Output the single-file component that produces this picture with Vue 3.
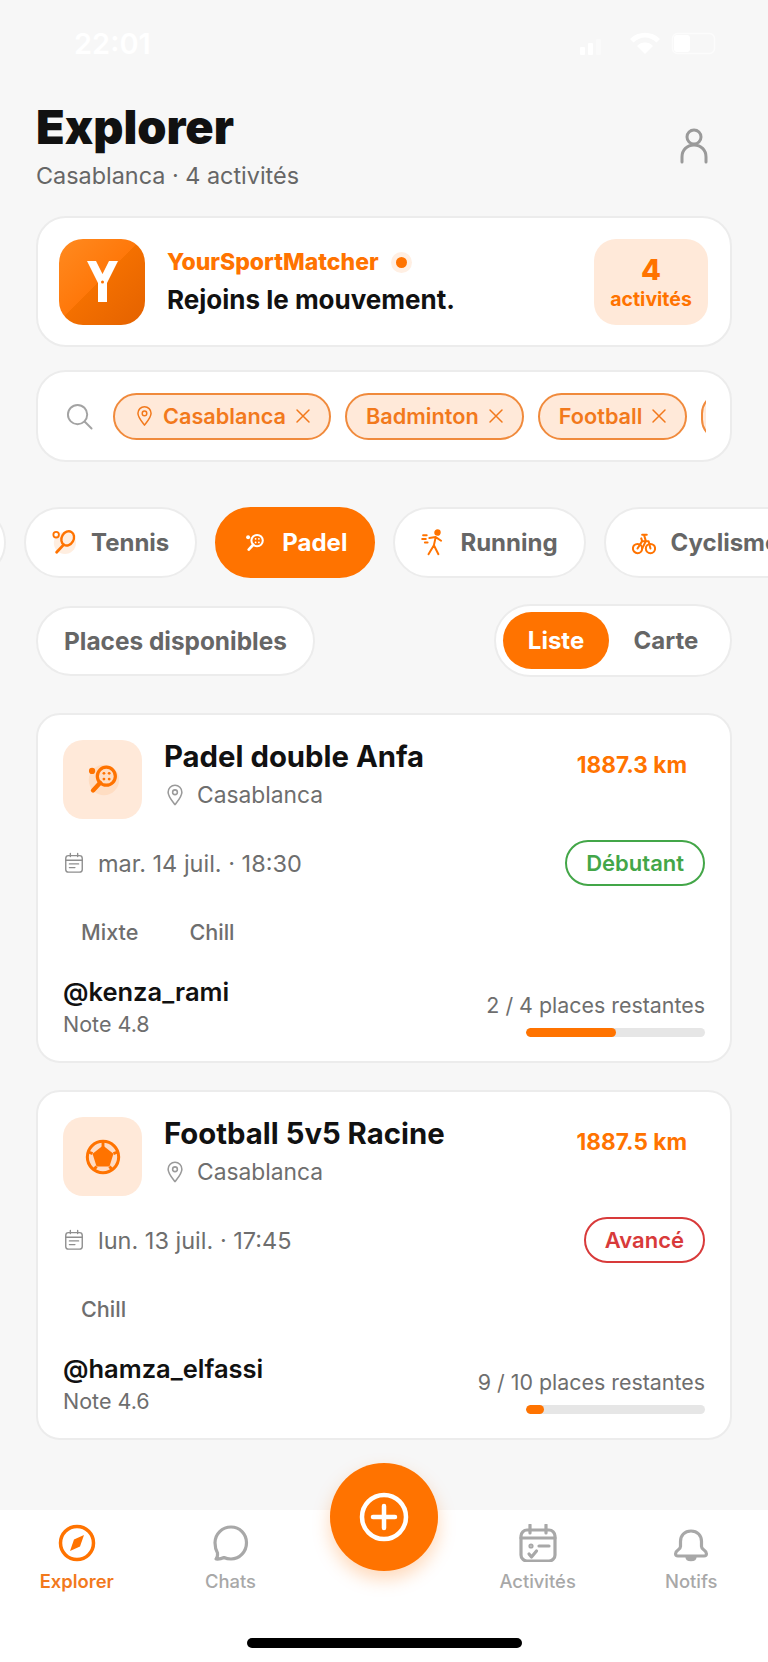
<script setup>
const filters = [
  { label: "Casablanca", pin: true },
  { label: "Badminton" },
  { label: "Football" },
];

const cards = [
  {
    title: "Padel double Anfa",
    icon: "padel",
    km: "1887.3 km",
    date: "mar. 14 juil. · 18:30",
    level: "Débutant",
    levelClass: "green",
    tags: ["Mixte", "Chill"],
    user: "@kenza_rami",
    note: "Note 4.8",
    places: "2 / 4 places restantes",
    fill: 50,
  },
  {
    title: "Football 5v5 Racine",
    icon: "ball",
    km: "1887.5 km",
    date: "lun. 13 juil. · 17:45",
    level: "Avancé",
    levelClass: "red",
    tags: ["Chill"],
    user: "@hamza_elfassi",
    note: "Note 4.6",
    places: "9 / 10 places restantes",
    fill: 10,
  },
];
</script>

<template>
  <div class="page">
    <!-- shared icons -->
    <svg width="0" height="0" class="defs">
      <symbol id="pin" viewBox="0 0 24 24">
        <path d="M12 22.500c-1-1.600-7.500-8.400-7.500-13.600a7.500 7.500 0 0 1 15 0c0 5.200-6.500 12-7.500 13.600z" fill="none" stroke="currentColor" stroke-width="1.700" stroke-linejoin="round" />
        <circle cx="12" cy="9" r="2.600" fill="none" stroke="currentColor" stroke-width="1.700" />
      </symbol>
      <symbol id="cross" viewBox="0 0 16 16">
        <path d="M2 2l12 12M14 2L2 14" fill="none" stroke="currentColor" stroke-width="1.500" stroke-linecap="round" />
      </symbol>
      <symbol id="padel" viewBox="0 0 40 40">
        <circle cx="21" cy="20" r="16" fill="#ff7300" opacity="0.1" />
        <circle cx="8.500" cy="10.500" r="3.300" fill="currentColor" />
        <circle cx="23.500" cy="16" r="9.500" fill="none" stroke="currentColor" stroke-width="3.400" />
        <path d="M17 23l-7.500 8" stroke="currentColor" stroke-width="4.600" stroke-linecap="round" />
        <circle cx="21" cy="13" r="1.500" fill="currentColor" />
        <circle cx="26.500" cy="13" r="1.500" fill="currentColor" />
        <circle cx="21" cy="19" r="1.500" fill="currentColor" />
        <circle cx="26.500" cy="19" r="1.500" fill="currentColor" />
      </symbol>
      <symbol id="ball" viewBox="0 0 40 40">
        <circle cx="20" cy="20" r="16.500" fill="#ffdcc4" stroke="currentColor" stroke-width="3.200" />
        <path d="M20 8l11 8.500-4.200 13.500H13.200L9 16.500z" fill="currentColor" />
        <path d="M20 4v6M31 16.500l5-2M26.800 30l3.500 4M13.200 30l-3.500 4M9 16.500l-5-2" stroke="currentColor" stroke-width="3" />
      </symbol>
      <symbol id="cal" viewBox="0 0 24 24">
        <rect x="3" y="4" width="18" height="18" rx="3" fill="none" stroke="currentColor" stroke-width="1.500" />
        <path d="M3 9h18M8 1.500V5M16 1.500V5M7 13h10M7 17h6" fill="none" stroke="currentColor" stroke-width="1.500" stroke-linecap="round" />
      </symbol>
    </svg>

    <div class="status">
      <span class="time">22:01</span>
      <div class="status-icons">
        <svg width="138" height="24" viewBox="0 0 138 24" fill="#fff">
          <rect x="0" y="15" width="5" height="8" rx="1" />
          <rect x="8" y="11" width="5" height="12" rx="1" />
          <rect x="16" y="7" width="5" height="16" rx="1" opacity="0.4" />
          <path d="M50 7a21 21 0 0 1 30 0l-3.500 3.500a16 16 0 0 0-23 0zM57 14a11 11 0 0 1 16 0l-8 8z" />
          <rect x="92.500" y="1.500" width="42" height="20" rx="5" fill="none" stroke="#fff" stroke-width="1.500" opacity="0.6" />
          <rect x="94" y="3" width="16" height="17" rx="3" />
        </svg>
      </div>
    </div>

    <header class="head">
      <div>
        <h1 class="title">Explorer</h1>
        <p class="subtitle">Casablanca · 4 activités</p>
      </div>
      <svg class="user-ic" width="28" height="36" viewBox="0 0 28 36" fill="none" stroke="#9a9a9a" stroke-width="3">
        <circle cx="14" cy="9" r="7" />
        <path d="M2 34v-5c0-7 5-12 12-12s12 5 12 12v5" stroke-linecap="round" />
      </svg>
    </header>

    <section class="banner">
      <div class="logo">
        <svg width="31" height="41" viewBox="0 0 31 41">
          <path d="M0 0h9l6.500 13L22 0h9L20 22v19h-9V22z" fill="#fff" />
          <circle cx="15.500" cy="21" r="1.500" fill="#ff7300" />
        </svg>
      </div>
      <div class="banner-text">
        <div class="brand">YourSportMatcher <span class="dot"></span></div>
        <div class="tagline">Rejoins le mouvement.</div>
      </div>
      <div class="stat">
        <strong>4</strong>
        <span>activités</span>
      </div>
    </section>

    <section class="search">
      <svg class="search-ic" width="27" height="27" viewBox="0 0 28 28" fill="none" stroke="#a3a3a3" stroke-width="2">
        <circle cx="12" cy="12" r="10" />
        <path d="M19.500 19.500l7 7" stroke-linecap="round" />
      </svg>
      <div class="filters">
        <span v-for="f in filters" :key="f.label" class="filter">
          <svg v-if="f.pin" class="filter-pin"><use href="#pin" /></svg>
          {{ f.label }}
          <svg class="filter-x"><use href="#cross" /></svg>
        </span>
        <span class="filter filter-stub"></span>
      </div>
    </section>

    <nav class="cats">
      <div class="cat cat-first"></div>
      <div class="cat">
        <svg width="24" height="28" viewBox="0 0 26 28" fill="none" stroke="#ff7300">
          <circle cx="14" cy="14" r="12" fill="#ff7300" opacity="0.12" stroke="none" />
          <circle cx="4.500" cy="5" r="3" stroke-width="2" />
          <ellipse cx="17" cy="9" rx="6.500" ry="8" transform="rotate(30 17 9)" stroke-width="2.600" />
          <path d="M12.500 16L5 24" stroke-width="3" stroke-linecap="round" />
        </svg>
        <span>Tennis</span>
      </div>
      <div class="cat active">
        <svg width="24" height="28" class="white-ic"><use href="#padel" /></svg>
        <span>Padel</span>
      </div>
      <div class="cat">
        <svg width="24" height="27" viewBox="0 0 24 30" fill="none" stroke="#ff7300" stroke-width="2.200" stroke-linecap="round" stroke-linejoin="round">
          <circle cx="17" cy="4" r="2.500" fill="#ff7300" />
          <path d="M8 10l7-1 6 4M15 9l-2 9 5 10M13 18l-6 10M1 7h4M0 11h4M3 15h3" />
        </svg>
        <span>Running</span>
      </div>
      <div class="cat">
        <svg width="24" height="26" viewBox="0 0 26 28" fill="none" stroke="#ff7300" stroke-width="2.200" stroke-linecap="round" stroke-linejoin="round">
          <circle cx="6" cy="20" r="5" />
          <circle cx="20" cy="20" r="5" />
          <path d="M6 20l5-8h7l2 8M11 12L10 9M13 5l2 7-4 8M11 5h5" />
        </svg>
        <span>Cyclisme</span>
      </div>
    </nav>

    <div class="toolbar">
      <div class="avail">Places disponibles</div>
      <div class="toggle">
        <span class="toggle-on">Liste</span>
        <span class="toggle-off">Carte</span>
      </div>
    </div>

    <main class="list">
      <article v-for="c in cards" :key="c.title" class="card">
        <div class="card-top">
          <div class="card-icon">
            <svg width="38" height="38"><use :href="'#' + c.icon" /></svg>
          </div>
          <div class="card-head">
            <h3>{{ c.title }}</h3>
            <p><svg class="card-pin"><use href="#pin" /></svg>Casablanca</p>
          </div>
          <span class="km">{{ c.km }}</span>
        </div>

        <div class="card-meta">
          <span class="date"><svg class="cal"><use href="#cal" /></svg>{{ c.date }}</span>
          <span class="level" :class="c.levelClass">{{ c.level }}</span>
        </div>

        <div class="tags">
          <span v-for="t in c.tags" :key="t">{{ t }}</span>
        </div>

        <div class="card-foot">
          <div>
            <div class="who">{{ c.user }}</div>
            <div class="note">{{ c.note }}</div>
          </div>
          <div class="seats">
            <div class="seats-text">{{ c.places }}</div>
            <div class="bar"><div class="bar-fill" :style="{ width: c.fill + '%' }"></div></div>
          </div>
        </div>
      </article>
    </main>

    <footer class="tabbar">
      <div class="tabs">
        <div class="tab on">
          <svg width="38" height="38" viewBox="0 0 38 38" fill="none">
            <circle cx="19" cy="19" r="16.500" stroke="#ff7300" stroke-width="3.500" />
            <path d="M26 11l-4 11.500L12 27l4-11.500z" fill="#ff7300" />
          </svg>
          <span>Explorer</span>
        </div>
        <div class="tab">
          <svg width="38" height="38" viewBox="0 0 38 38" fill="none" stroke="#a8a8a8" stroke-width="3.200" stroke-linejoin="round">
            <path d="M20 3c8.800 0 15.500 7 15.500 15.800S28.800 35 20 35c-2.500 0-5-.5-7-1.500-2 1-5 1.800-8 1.500 1.200-1.300 1.800-3 1.500-6C4.800 26 4 22.500 4 18.800 4 10 11.200 3 20 3z" />
          </svg>
          <span>Chats</span>
        </div>
        <div class="tab"></div>
        <div class="tab">
          <svg width="38" height="38" viewBox="0 0 38 38" fill="none" stroke="#a8a8a8" stroke-width="3.200" stroke-linecap="round" stroke-linejoin="round">
            <rect x="2" y="6" width="34" height="31" rx="6" />
            <path d="M2 14h34M11 1v8M27 1v8M20 22h10" />
            <circle cx="12" cy="22" r="1" />
            <path d="M10 30l2.500 3 5-6" />
          </svg>
          <span>Activités</span>
        </div>
        <div class="tab">
          <svg width="38" height="38" viewBox="0 0 38 38" fill="none" stroke="#a8a8a8" stroke-width="3.200" stroke-linejoin="round">
            <path d="M19 7c-6.500 0-10.500 4.500-10.500 10.500v5c0 1.500-.8 2.300-2.500 3.500-3 2-3.500 6 0 6h26c3.500 0 3-4 0-6-1.700-1.200-2.500-2-2.500-3.500v-5C29.500 11.500 25.500 7 19 7z" />
            <path d="M15 33h8c0 3.500-8 3.500-8 0z" fill="#a8a8a8" />
          </svg>
          <span>Notifs</span>
        </div>
      </div>
      <button class="fab" type="button" aria-label="Ajouter">
        <svg width="50" height="50" viewBox="0 0 50 50" fill="none" stroke="#fff" stroke-width="4.500">
          <circle cx="25" cy="25" r="22" />
          <path d="M14 25h22M25 14v22" stroke-linecap="round" />
        </svg>
      </button>
      <div class="home"></div>
    </footer>
  </div>
</template>

<style>
html,
body {
  margin: 0;
  background: #f7f7f7;
}
</style>

<style scoped>
* {
  box-sizing: border-box;
}
.page {
  width: 768px;
  height: 1662px;
  display: flex;
  flex-direction: column;
  overflow: hidden;
  background: #f7f7f7;
  color: #111;
  font-family: Inter, "Noto Sans", sans-serif;
}
.defs {
  position: absolute;
}

/* STATUS */
.status {
  height: 100px;
  flex: none;
  padding: 26px 50px 0 74px;
  display: flex;
  justify-content: space-between;
  align-items: flex-start;
}
.time {
  color: #fff;
  font-size: 29px;
  font-weight: 600;
  line-height: 36px;
}
.status-icons {
  padding-top: 6px;
}

/* HEADER */
.head {
  height: 116px;
  flex: none;
  margin: 0 36px;
  display: flex;
  justify-content: space-between;
  align-items: flex-start;
}
.title {
  margin: 0;
  font-size: 46.800px;
  font-weight: 900;
  line-height: 54px;
}
.subtitle {
  margin: 7px 0 0;
  font-size: 23.400px;
  line-height: 30px;
  color: #666;
}
.user-ic {
  margin: 28px 24px 0 0;
}

/* BANNER */
.banner {
  flex: none;
  height: 131px;
  margin: 0 36px;
  padding: 0 22px 0 21px;
  display: flex;
  align-items: center;
  background: #fff;
  border: 2px solid #ececec;
  border-radius: 30px;
}
.logo {
  width: 86px;
  height: 86px;
  flex: none;
  border-radius: 24px;
  background: linear-gradient(135deg, #ff8a20, #ff780a 48%, #f47000 48%, #e46200);
  display: flex;
  align-items: center;
  justify-content: center;
}
.banner-text {
  flex: 1;
  margin-left: 22px;
}
.brand {
  display: flex;
  align-items: center;
  gap: 17px;
  font-size: 23px;
  font-weight: 800;
  line-height: 28px;
  color: #ff7300;
}
.dot {
  width: 11px;
  height: 11px;
  border-radius: 50%;
  background: #ff7300;
  box-shadow: 0 0 0 5px #ffefe3;
}
.tagline {
  margin-top: 9px;
  font-size: 26px;
  font-weight: 700;
  line-height: 30px;
}
.stat {
  width: 114px;
  height: 86px;
  border-radius: 22px;
  background: #ffe9d9;
  color: #ff7300;
  display: flex;
  flex-direction: column;
  align-items: center;
  justify-content: center;
}
.stat strong {
  font-size: 29px;
  font-weight: 800;
  line-height: 34px;
}
.stat span {
  font-size: 19.500px;
  font-weight: 700;
  line-height: 24px;
}

/* SEARCH */
.search {
  flex: none;
  height: 92px;
  margin: 23px 36px 0;
  padding-left: 28px;
  display: flex;
  align-items: center;
  background: #fff;
  border: 2px solid #ececec;
  border-radius: 30px;
}
.search-ic {
  flex: none;
}
.filters {
  width: 593px;
  margin-left: 20px;
  display: flex;
  gap: 14px;
  overflow: hidden;
}
.filter {
  flex: none;
  height: 47px;
  padding: 0 18px 0 19px;
  display: flex;
  align-items: center;
  gap: 8px;
  background: #ffe9d9;
  border: 2px solid #f08a3c;
  border-radius: 24px;
  color: #f2791c;
  font-size: 21.700px;
  font-weight: 600;
  white-space: nowrap;
}
.filter-stub {
  width: 40px;
}
.filter-pin {
  width: 21px;
  height: 24px;
}
.filter-x {
  width: 16px;
  height: 16px;
  margin-left: 1px;
}

/* CATEGORIES */
.cats {
  flex: none;
  height: 71px;
  margin-top: 45px;
  display: flex;
  gap: 18px;
  overflow: hidden;
}
.cat {
  flex: none;
  height: 71px;
  padding: 0 26px;
  display: flex;
  align-items: center;
  gap: 15px;
  background: #fff;
  border: 2px solid #ececec;
  border-radius: 36px;
  color: #666;
  font-size: 24px;
  font-weight: 700;
}
.cat-first {
  width: 100px;
  margin-left: -94px;
}
.cat.active {
  background: #ff7300;
  border-color: #ff7300;
  color: #fff;
}
.white-ic {
  color: #fff;
}

/* TOOLBAR */
.toolbar {
  flex: none;
  height: 73px;
  margin: 26px 36px 0;
  display: flex;
  align-items: center;
  justify-content: space-between;
}
.avail {
  height: 70px;
  padding: 0 26px;
  display: flex;
  align-items: center;
  background: #fff;
  border: 2px solid #ececec;
  border-radius: 35px;
  font-size: 24.400px;
  font-weight: 700;
  color: #666;
}
.toggle {
  width: 238px;
  height: 73px;
  padding: 7px;
  display: flex;
  align-items: center;
  background: #fff;
  border: 2px solid #ececec;
  border-radius: 37px;
  font-size: 24px;
  font-weight: 700;
}
.toggle-on {
  width: 106px;
  height: 57px;
  display: flex;
  align-items: center;
  justify-content: center;
  border-radius: 29px;
  background: #ff7300;
  color: #fff;
}
.toggle-off {
  flex: 1;
  text-align: center;
  color: #666;
}

/* CARDS */
.list {
  flex: 1;
  margin: 36px 36px 0;
  display: flex;
  flex-direction: column;
  gap: 27px;
}
.card {
  height: 350px;
  padding: 25px 25px 0;
  background: #fff;
  border: 2px solid #ececec;
  border-radius: 24px;
}
.card-top {
  height: 79px;
  display: flex;
}
.card-icon {
  width: 79px;
  height: 79px;
  flex: none;
  display: flex;
  align-items: center;
  justify-content: center;
  border-radius: 20px;
  background: #ffe9d9;
  color: #ff7300;
}
.card-head {
  flex: 1;
  margin-left: 22px;
}
.card-head h3 {
  margin: 0;
  font-size: 29.300px;
  font-weight: 700;
  line-height: 34px;
}
.card-head p {
  margin: 6px 0 0;
  display: flex;
  align-items: center;
  font-size: 22.800px;
  line-height: 30px;
  color: #6e6e6e;
}
.card-pin {
  width: 22px;
  height: 26px;
  margin-right: 11px;
  color: #9a9a9a;
}
.km {
  margin: 11px 18px 0 0;
  font-size: 22.600px;
  font-weight: 700;
  line-height: 28px;
  color: #ff7300;
}
.card-meta {
  height: 46px;
  margin-top: 21px;
  display: flex;
  align-items: center;
  justify-content: space-between;
}
.date {
  display: flex;
  align-items: center;
  font-size: 23.500px;
  color: #6e6e6e;
}
.cal {
  width: 22px;
  height: 24px;
  margin-right: 13px;
  color: #8e8e8e;
}
.level {
  height: 46px;
  padding: 0 19px;
  display: flex;
  align-items: center;
  border: 2px solid;
  border-radius: 23px;
  font-size: 22px;
  font-weight: 600;
}
.level.green {
  color: #43a648;
  border-color: #43a648;
}
.level.red {
  color: #d83a3a;
  border-color: #d83a3a;
}
.tags {
  height: 40px;
  margin-top: 26px;
  padding-left: 18px;
  display: flex;
  align-items: center;
  gap: 51px;
  font-size: 21.600px;
  font-weight: 500;
  color: #6e6e6e;
}
.card-foot {
  margin-top: 23px;
  display: flex;
  justify-content: space-between;
}
.who {
  font-size: 25.500px;
  font-weight: 600;
  line-height: 34px;
}
.note {
  font-size: 21.500px;
  line-height: 30px;
  color: #6e6e6e;
}
.seats {
  display: flex;
  flex-direction: column;
  align-items: flex-end;
  padding-top: 15px;
}
.seats-text {
  font-size: 21.400px;
  line-height: 30px;
  color: #6e6e6e;
}
.bar {
  width: 179px;
  height: 9px;
  margin-top: 8px;
  border-radius: 5px;
  background: #e6e6e6;
  overflow: hidden;
}
.bar-fill {
  height: 100%;
  border-radius: 5px;
  background: #ff7300;
}

/* NAV */
.tabbar {
  flex: none;
  height: 152px;
  position: relative;
  background: #fff;
}
.tabs {
  display: grid;
  grid-template-columns: repeat(5, 1fr);
  padding-top: 14px;
}
.tab {
  display: flex;
  flex-direction: column;
  align-items: center;
  gap: 7px;
  font-size: 18.400px;
  font-weight: 500;
  line-height: 24px;
  color: #a8a8a8;
}
.tab.on {
  color: #f2791c;
  font-weight: 600;
}
.fab {
  position: absolute;
  left: 330px;
  top: -47px;
  width: 108px;
  height: 108px;
  padding: 0;
  display: flex;
  align-items: center;
  justify-content: center;
  border: none;
  border-radius: 50%;
  background: #ff7300;
  box-shadow: 0 8px 18px rgba(255, 115, 0, 0.28);
}
.home {
  position: absolute;
  left: 247px;
  bottom: 14px;
  width: 275px;
  height: 10px;
  border-radius: 5px;
  background: #000;
}
</style>
